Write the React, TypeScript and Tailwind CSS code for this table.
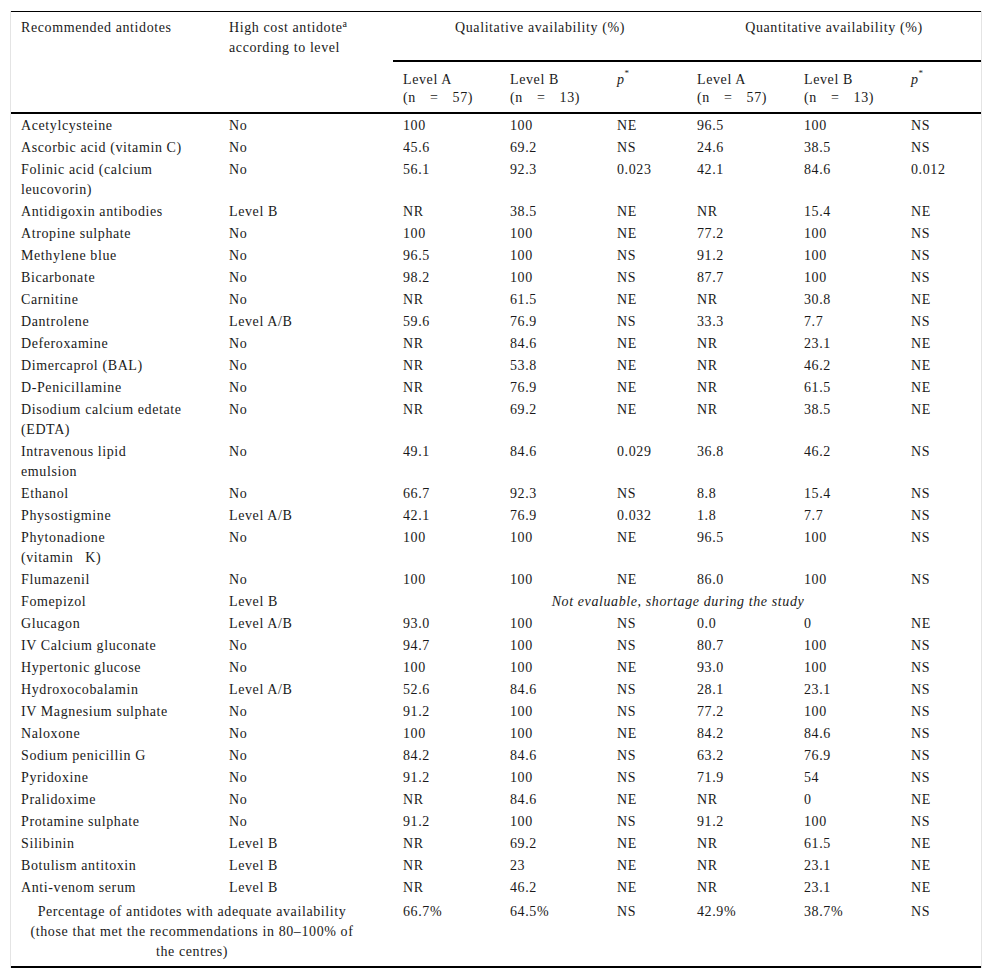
import React from "react";

type Row = {
  name: string[];
  cost: string;
  values?: string[];
};

const rows: Row[] = [
  { name: ["Acetylcysteine"], cost: "No", values: ["100", "100", "NE", "96.5", "100", "NS"] },
  { name: ["Ascorbic acid (vitamin C)"], cost: "No", values: ["45.6", "69.2", "NS", "24.6", "38.5", "NS"] },
  { name: ["Folinic acid (calcium", "leucovorin)"], cost: "No", values: ["56.1", "92.3", "0.023", "42.1", "84.6", "0.012"] },
  { name: ["Antidigoxin antibodies"], cost: "Level B", values: ["NR", "38.5", "NE", "NR", "15.4", "NE"] },
  { name: ["Atropine sulphate"], cost: "No", values: ["100", "100", "NE", "77.2", "100", "NS"] },
  { name: ["Methylene blue"], cost: "No", values: ["96.5", "100", "NS", "91.2", "100", "NS"] },
  { name: ["Bicarbonate"], cost: "No", values: ["98.2", "100", "NS", "87.7", "100", "NS"] },
  { name: ["Carnitine"], cost: "No", values: ["NR", "61.5", "NE", "NR", "30.8", "NE"] },
  { name: ["Dantrolene"], cost: "Level A/B", values: ["59.6", "76.9", "NS", "33.3", "7.7", "NS"] },
  { name: ["Deferoxamine"], cost: "No", values: ["NR", "84.6", "NE", "NR", "23.1", "NE"] },
  { name: ["Dimercaprol (BAL)"], cost: "No", values: ["NR", "53.8", "NE", "NR", "46.2", "NE"] },
  { name: ["D-Penicillamine"], cost: "No", values: ["NR", "76.9", "NE", "NR", "61.5", "NE"] },
  { name: ["Disodium calcium edetate", "(EDTA)"], cost: "No", values: ["NR", "69.2", "NE", "NR", "38.5", "NE"] },
  { name: ["Intravenous lipid", "emulsion"], cost: "No", values: ["49.1", "84.6", "0.029", "36.8", "46.2", "NS"] },
  { name: ["Ethanol"], cost: "No", values: ["66.7", "92.3", "NS", "8.8", "15.4", "NS"] },
  { name: ["Physostigmine"], cost: "Level A/B", values: ["42.1", "76.9", "0.032", "1.8", "7.7", "NS"] },
  { name: ["Phytonadione", "(vitamin K)"], cost: "No", values: ["100", "100", "NE", "96.5", "100", "NS"] },
  { name: ["Flumazenil"], cost: "No", values: ["100", "100", "NE", "86.0", "100", "NS"] },
  { name: ["Fomepizol"], cost: "Level B" },
  { name: ["Glucagon"], cost: "Level A/B", values: ["93.0", "100", "NS", "0.0", "0", "NE"] },
  { name: ["IV Calcium gluconate"], cost: "No", values: ["94.7", "100", "NS", "80.7", "100", "NS"] },
  { name: ["Hypertonic glucose"], cost: "No", values: ["100", "100", "NE", "93.0", "100", "NS"] },
  { name: ["Hydroxocobalamin"], cost: "Level A/B", values: ["52.6", "84.6", "NS", "28.1", "23.1", "NS"] },
  { name: ["IV Magnesium sulphate"], cost: "No", values: ["91.2", "100", "NS", "77.2", "100", "NS"] },
  { name: ["Naloxone"], cost: "No", values: ["100", "100", "NE", "84.2", "84.6", "NS"] },
  { name: ["Sodium penicillin G"], cost: "No", values: ["84.2", "84.6", "NS", "63.2", "76.9", "NS"] },
  { name: ["Pyridoxine"], cost: "No", values: ["91.2", "100", "NS", "71.9", "54", "NS"] },
  { name: ["Pralidoxime"], cost: "No", values: ["NR", "84.6", "NE", "NR", "0", "NE"] },
  { name: ["Protamine sulphate"], cost: "No", values: ["91.2", "100", "NS", "91.2", "100", "NS"] },
  { name: ["Silibinin"], cost: "Level B", values: ["NR", "69.2", "NE", "NR", "61.5", "NE"] },
  { name: ["Botulism antitoxin"], cost: "Level B", values: ["NR", "23", "NE", "NR", "23.1", "NE"] },
  { name: ["Anti-venom serum"], cost: "Level B", values: ["NR", "46.2", "NE", "NR", "23.1", "NE"] },
];

const cell = "pl-[10px] pt-[2px] pb-0 align-top text-left font-normal whitespace-nowrap";

const PStar = () => (
  <span>
    <i>p</i>
    <sup className="text-[9px] -top-[0.9em]">*</sup>
  </span>
);

const LevelHead = ({ level, n }: { level: string; n: string }) => (
  <th className="pl-[10px] pt-[9px] pb-[5px] align-top text-left font-normal leading-[18px] border-b-2 border-black whitespace-nowrap">
    {level}
    <br />
    <span className="[word-spacing:10px]">(n = {n})</span>
  </th>
);

export default function App() {
  return (
    <div className="bg-white pt-[11px] px-[10px] pb-[11px] text-[#1a1a1a] text-[14px] tracking-[0.6px] leading-[20px] font-['Liberation_Serif','Times_New_Roman',serif]">
      <div className="w-[972px] border-x border-[#e4e4e4]">
        <table className="w-[970px] table-fixed border-separate border-spacing-0 border-t border-black">
          <colgroup>
            <col className="w-[208px]" />
            <col className="w-[174px]" />
            <col className="w-[107px]" />
            <col className="w-[107px]" />
            <col className="w-[80px]" />
            <col className="w-[107px]" />
            <col className="w-[107px]" />
            <col className="w-[80px]" />
          </colgroup>
          <thead>
            <tr>
              <th rowSpan={2} className="pl-[10px] pt-[6px] align-top text-left font-normal border-b-2 border-black">
                Recommended antidotes
              </th>
              <th rowSpan={2} className="pl-[10px] pt-[6px] align-top text-left font-normal border-b-2 border-black">
                High cost antidote<sup className="text-[10px]">a</sup>
                <br />
                according to level
              </th>
              <th colSpan={3} className="pt-[6px] pb-[22px] align-top text-center font-normal border-b-2 border-black">
                Qualitative availability (%)
              </th>
              <th colSpan={3} className="pt-[6px] pb-[22px] align-top text-center font-normal border-b-2 border-black">
                Quantitative availability (%)
              </th>
            </tr>
            <tr>
              <LevelHead level="Level A" n="57" />
              <LevelHead level="Level B" n="13" />
              <th className="pl-[10px] pt-[9px] pb-[5px] align-top text-left font-normal leading-[18px] border-b-2 border-black">
                <PStar />
              </th>
              <LevelHead level="Level A" n="57" />
              <LevelHead level="Level B" n="13" />
              <th className="pl-[10px] pt-[9px] pb-[5px] align-top text-left font-normal leading-[18px] border-b-2 border-black">
                <PStar />
              </th>
            </tr>
          </thead>
          <tbody>
            {rows.map((r) => (
              <tr key={r.name.join(" ")}>
                <td className={cell}>
                  {r.name.map((line, i) => (
                    <div key={i} className="[word-spacing:8px] first:[word-spacing:0px]">
                      {line}
                    </div>
                  ))}
                </td>
                <td className={cell}>{r.cost}</td>
                {r.values ? (
                  r.values.map((v, i) => (
                    <td key={i} className={cell}>
                      {v}
                    </td>
                  ))
                ) : (
                  <td colSpan={6} className="pl-[10px] pr-[28px] pt-[2px] pb-0 text-center italic whitespace-nowrap">
                    Not evaluable, shortage during the study
                  </td>
                )}
              </tr>
            ))}
            <tr>
              <td colSpan={2} className="pl-[10px] pr-[30px] pt-[4px] pb-[4px] text-center align-top border-b-2 border-black whitespace-nowrap">
                Percentage of antidotes with adequate availability
                <br />
                (those that met the recommendations in 80–100% of
                <br />
                the centres)
              </td>
              {["66.7%", "64.5%", "NS", "42.9%", "38.7%", "NS"].map((v, i) => (
                <td key={i} className="pl-[10px] pt-[4px] align-top border-b-2 border-black">
                  {v}
                </td>
              ))}
            </tr>
          </tbody>
        </table>
      </div>
    </div>
  );
}
